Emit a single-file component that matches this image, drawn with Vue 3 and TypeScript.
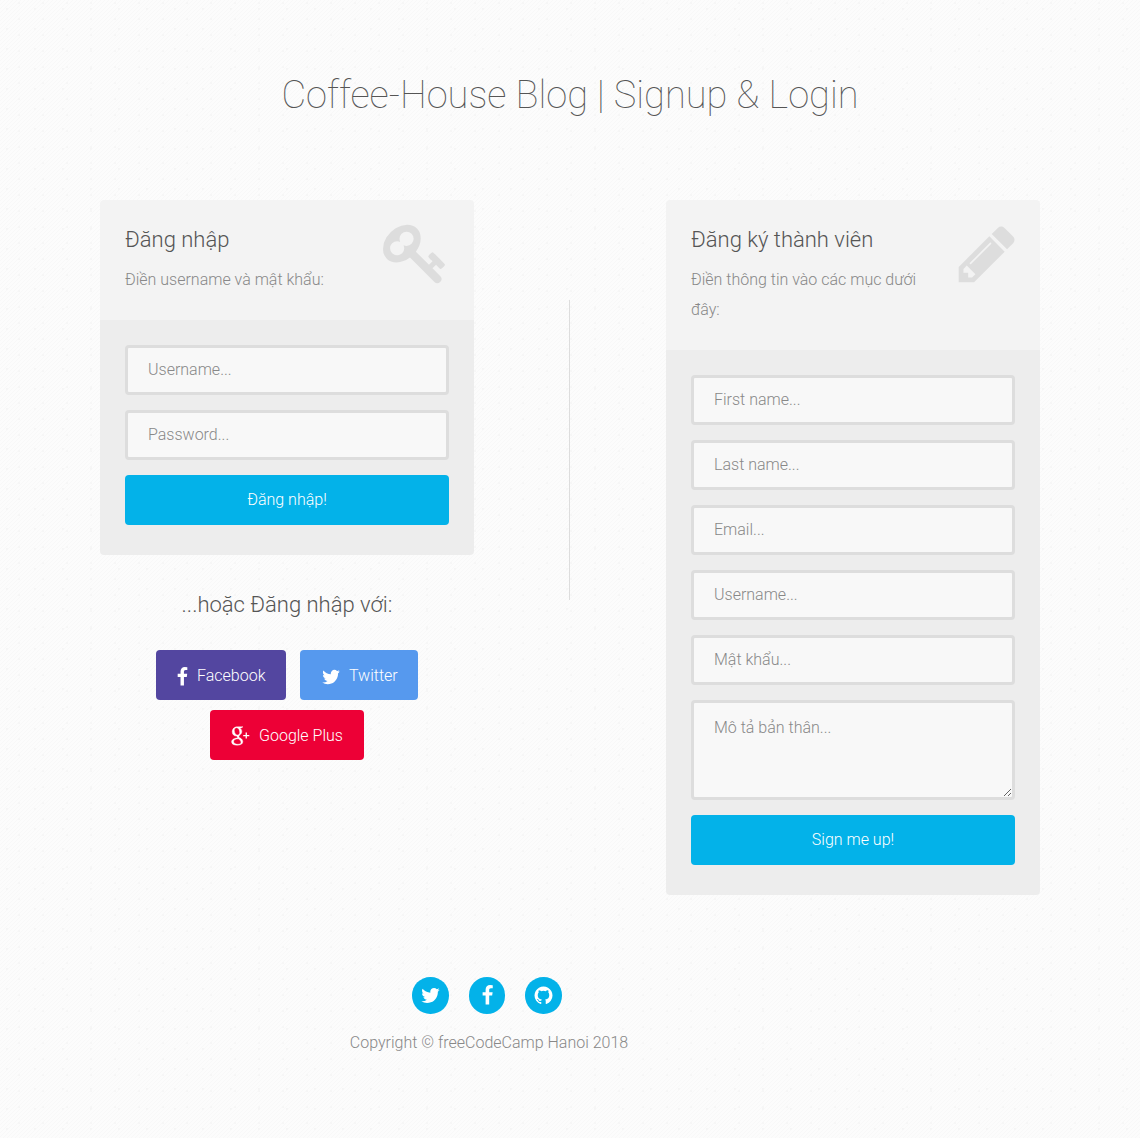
<script setup lang="ts">
interface Field { label: string; type: string }

const loginFields: Field[] = [
  { label: 'Username...', type: 'text' },
  { label: 'Password...', type: 'password' },
]
const signupFields: Field[] = [
  { label: 'First name...', type: 'text' },
  { label: 'Last name...', type: 'text' },
  { label: 'Email...', type: 'text' },
  { label: 'Username...', type: 'text' },
  { label: 'Mật khẩu...', type: 'password' },
]

const icons = {
  facebook: 'M1343 12v264h-157q-86 0-116 36t-30 108v189h293l-39 296h-254v759h-306v-759h-255v-296h255v-218q0-186 104-288.500t277-102.500q147 0 228 12z',
  twitter: 'M1684 408q-67 98-162 167 1 14 1 42 0 130-38 259.500t-115.500 248.500-184.500 210.500-258 146-323 54.500q-271 0-496-145 35 4 78 4 225 0 401-138-105-2-188-64.500t-114-159.500q33 5 61 5 43 0 85-11-112-23-185.500-111.500t-73.500-205.500v-4q68 38 146 41-66-44-105-115t-39-154q0-88 44-163 121 149 294.500 238.500t371.500 99.500q-8-38-8-74 0-134 94.500-228.500t228.500-94.500q140 0 236 102 109-21 205-78-37 115-142 178 93-10 186-50z',
  github: 'M896 128q209 0 385.500 103t279.500 279.500 103 385.500q0 251-146.500 451.500t-378.500 277.500q-27 5-40-7t-13-30q0-3 .5-76.500t.5-134.500q0-97-52-142 57-6 102.500-18t94-39 81-66.500 53-105 20.500-150.500q0-119-79-206 37-91-8-204-28-9-81 11t-92 44l-38 24q-93-26-192-26t-192 26q-16-11-42.500-27t-83.500-38.500-85-13.500q-45 113-8 204-79 87-79 206 0 85 20.500 150t52.500 105 80.500 67 94 39 102.500 18q-39 36-49 103-21 10-45 15t-57 5-65.500-21.500-55.500-62.500q-19-32-48.500-52t-49.500-24l-20-3q-21 0-29 4.500t-5 11.500 9 14 13 12l7 5q22 10 43.500 38t31.500 51l10 23q13 38 44 61.500t67 30 69.500 7 55.500-3.500l23-4q0 38 .5 88.500t.5 54.500q0 18-13 30t-40 7q-232-77-378.500-277.500t-146.500-451.500q0-209 103-385.500t279.500-279.500 385.500-103z',
  key: 'M832 512q0-80-56-136t-136-56-136 56-56 136q0 42 19 83-41-19-83-19-80 0-136 56t-56 136 56 136 136 56 136-56 56-136q0-42-19-83 41 19 83 19 80 0 136-56t56-136zm851 704q0 17-49 66t-66 49q-9 0-28.500-16t-36.500-33-38.500-40-24.500-26l-96 96 220 220q28 28 28 68 0 42-39 81t-81 39q-40 0-68-28l-671-671q-176 131-365 131-163 0-265.500-102.500t-102.500-265.500q0-160 95-313t248-248 313-95q163 0 265.500 102.500t102.500 265.500q0 189-131 365l355 355 96-96q-3-3-26-24.500t-40-38.500-33-36.500-16-28.500q0-17 49-66t66-49q13 0 23 10 6 6 46 44.500t82 79.500 86.500 86 73 78 28.500 41z',
  pencil: 'M491 1536l91-91-235-235-91 91v107h128v128h107zm523-928q0-22-22-22-10 0-17 7l-542 542q-7 7-7 17 0 22 22 22 10 0 17-7l542-542q7-7 7-17zm-54-192l416 416-832 832h-416v-416zm683 96q0 53-37 90l-166 166-416-416 166-165q36-38 90-38 53 0 91 38l235 234q37 39 37 91z',
}
const footerIcons = [icons.twitter, icons.facebook, icons.github]
</script>

<template>
  <div class="page">
    <h1>Coffee-House Blog | Signup &amp; Login</h1>
    <main class="columns">
      <section class="column">
        <div class="card">
          <header class="card-top">
            <div class="intro">
              <h3>Đăng nhập</h3>
              <p>Điền username và mật khẩu:</p>
            </div>
            <svg class="big-icon key" viewBox="0 0 1792 1792"><path :d="icons.key" /></svg>
          </header>
          <form class="card-form" @submit.prevent>
            <input v-for="f in loginFields" :key="f.label" :type="f.type" :placeholder="f.label" />
            <button type="submit">Đăng nhập!</button>
          </form>
        </div>
        <div class="social">
          <h3>...hoặc Đăng nhập với:</h3>
          <div class="social-links">
            <a class="link facebook"><svg class="fb" viewBox="479 0 864 1792"><path :d="icons.facebook" /></svg>Facebook</a>
            <a class="link twitter"><svg class="tw" viewBox="0 0 1792 1792"><path :d="icons.twitter" /></svg>Twitter</a>
            <a class="link google">
              <svg class="gp" viewBox="0 0 19 20">
                <path class="g" fill-rule="evenodd" d="M6.3 .8H12L10.3 1.9H8.8C10 2.8 10.8 3.9 10.8 5.4C10.8 7.2 9.8 8.1 8.9 8.9C8.2 9.5 7.9 9.8 7.9 10.4C7.9 11.1 8.6 11.5 9.4 12.1C10.8 13.2 11.8 14 11.8 15.7C11.8 17.8 9.8 19.2 6.2 19.2C2.9 19.2.6 18.2.6 16C.6 13.5 3.2 12.1 6.7 12C6.2 11.4 6 11 6 10.1C2.8 10.3 1.2 8.2 1.2 5.8C1.2 2.7 3.6.8 6.3.8ZM5.7 1.7C4.2 1.7 3.3 2.8 3.3 4.4C3.3 6.7 4.6 9 6.6 9C8 9 8.7 7.9 8.7 6.5C8.7 4.2 7.5 1.7 5.7 1.7ZM7.3 12.8C4.6 12.8 2.6 13.7 2.6 15.5C2.6 17.3 4.4 18.3 6.8 18.3C8.8 18.3 10 17.6 10 16.2C10 14.7 8.8 13.9 7.3 12.8Z" />
                <path d="M14.6 6.5h1.3v2.4h2.4v1.3h-2.4v2.4h-1.3v-2.4h-2.4V8.9h2.4Z" />
              </svg>Google Plus</a>
          </div>
        </div>
      </section>
      <div class="divider"></div>
      <section class="column">
        <div class="card">
          <header class="card-top">
            <div class="intro">
              <h3>Đăng ký thành viên</h3>
              <p>Điền thông tin vào các mục dưới đây:</p>
            </div>
            <svg class="big-icon pencil" viewBox="0 0 1792 1792"><path :d="icons.pencil" /></svg>
          </header>
          <form class="card-form" @submit.prevent>
            <input v-for="f in signupFields" :key="f.label" :type="f.type" :placeholder="f.label" />
            <textarea placeholder="Mô tả bản thân..."></textarea>
            <button type="submit">Sign me up!</button>
          </form>
        </div>
      </section>
    </main>
    <footer>
      <div class="circles">
        <a v-for="(d, i) in footerIcons" :key="i"><svg viewBox="0 0 1792 1792"><path :d="d" /></svg></a>
      </div>
      <p>Copyright © freeCodeCamp Hanoi 2018</p>
    </footer>
  </div>
</template>

<style>
body { margin: 0; background: #fcfcfc; }
</style>

<style scoped>
* { box-sizing: border-box; }
.page {
  height: 1138px;
  overflow: hidden;
  padding-top: 68px;
  font: 300 16px/30px Roboto, "Open Sans", sans-serif;
  color: #888;
  background-color: #fcfcfc;
  background-image:
    radial-gradient(circle at 7px 9px, #f5f5f5 0.7px, transparent 0.8px),
    radial-gradient(circle at 19px 3px, #f6f6f6 0.7px, transparent 0.8px),
    linear-gradient(135deg, #f8f8f8 12.5%, #fcfcfc 12.5% 50%, #f8f8f8 50% 62.5%, #fcfcfc 62.5%);
  background-size: 28px 20px, 24px 16px, 4px 4px;
}
h1, h3, p { margin: 0; }
h1 { font-size: 38px; font-weight: 100; line-height: 54px; text-align: center; color: #555; }
h3 { font-size: 22px; font-weight: 300; line-height: 30px; color: #555; }
.columns { display: flex; align-items: flex-start; margin: 78px 100px 0; height: 695px; }
.column { width: 374px; }
.divider { width: 1px; height: 300px; margin: 100px 96px 0 95px; background: #ddd; }
.card { border-radius: 4px; overflow: hidden; }
.card-top { display: flex; justify-content: space-between; padding: 25px; background: #f3f3f3; }
.intro { width: 243px; }
.intro p { margin-top: 10px; }
.intro h3 { height: 30px; }
.big-icon { width: 66px; height: 66px; margin-bottom: -20px; fill: #ddd; }
.key { margin-top: -5px; }
.pencil { margin-right: -5px; margin-top: -4.5px; }
.card-form { display: flex; flex-direction: column; gap: 15px; padding: 25px 25px 30px; background: #ededed; }
input, textarea, button { display: block; width: 100%; height: 50px; margin: 0; border-radius: 4px; font: 300 16px/50px Roboto, sans-serif; }
input, textarea { padding: 0 20px; border: 3px solid #ddd; background: #f8f8f8; color: #888; outline: none; }
input::placeholder, textarea::placeholder { color: #888; opacity: 1; }
textarea { height: 100px; padding-top: 10px; line-height: 30px; resize: vertical; }
button { padding: 0; border: 0; background: #03b2e9; color: #fff; }
.social { padding-top: 35px; text-align: center; }
.social-links { display: flex; flex-wrap: wrap; justify-content: center; gap: 10px 14px; margin-top: 30px; }
.link { display: flex; align-items: center; height: 50px; padding: 2px 21px 0; border-radius: 4px; color: #fff; }
.link svg { fill: #fff; flex: none; }
.facebook { background: #5346a0; width: 130px; }
.twitter { background: #5699ee; width: 118px; }
.google { background: #ed0036; width: 154px; }
.fb { width: 11px; height: 20px; margin-right: 9px; margin-top: 2px; }
.tw { width: 20px; height: 20px; margin-right: 8px; margin-top: 1px; }
.gp { width: 19px; height: 20px; margin-right: 9px; margin-top: -1px; }
.gp .g { stroke: #fff; stroke-width: 0.4; }
footer { width: 374px; margin: 82px 0 0 302px; text-align: center; }
.circles { display: flex; gap: 20px; justify-content: center; height: 37px; margin-right: 4px; }
.circles a { display: flex; align-items: center; justify-content: center; width: 36.5px; height: 36.5px; border-radius: 50%; background: #03b2e9; }
.circles svg { width: 21px; height: 21px; fill: #fff; }
footer p { margin-top: 14px; }
</style>
